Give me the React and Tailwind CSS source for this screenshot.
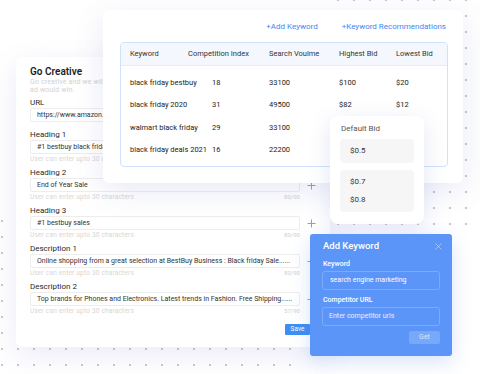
import React from 'react';

const dots =
	'bg-[radial-gradient(circle,#c3c6ce_0.8px,transparent_1.2px)] bg-[length:16px_16px]';

const fields = [
	{ label: 'Heading 1', value: '#1 bestbuy black friday', count: '80/90' },
	{ label: 'Heading 2', value: 'End of Year Sale', count: '80/90' },
	{ label: 'Heading 3', value: '#1 bestbuy sales', count: '80/90' },
	{
		label: 'Description 1',
		value: 'Online shopping from a great selection at BestBuy Business : Black friday Sale......',
		count: '80/90'
	},
	{
		label: 'Description 2',
		value: 'Top brands for Phones and Electronics. Latest trends in Fashion. Free Shipping......',
		count: '57/90'
	}
];

const rows = [
	['black friday bestbuy', '18', '33100', '$100', '$20'],
	['black friday 2020', '31', '49500', '$82', '$12'],
	['walmart black friday', '29', '33100', '', ''],
	['black friday deals 2021', '16', '22200', '', '']
];

const cols = 'grid grid-cols-[58px_81px_70px_57px_1fr] pl-[9px]';

const Plus = () => (
	<svg width="9" height="9" viewBox="0 0 9 9" className="shrink-0">
		<path d="M4.5 0.5v8M0.5 4.5h8" stroke="#6ea6f5" strokeWidth="1" />
	</svg>
);

const CreativeCard = () => (
	<div className="absolute left-[16px] top-[57px] w-[314px] h-[290px] bg-white rounded-[6px] shadow-[0_8px_28px_rgba(90,100,190,0.13)] pl-[14px] pt-[9px]">
		<div className="text-[10px] leading-[12px] font-semibold text-[#1d1d1f]">Go Creative</div>
		<div className="text-[7px] leading-[8px] text-[#d2d2d2] tracking-[0.02em]">
			Go creative and we will
			<br />
			ad would win.
		</div>
		<div className="mt-[4px] text-[8px] leading-[10px] text-[#2a2a2a]">URL</div>
		<div className="w-[270px] h-[14px] border border-[#ededed] rounded-[2px] pl-[6px] text-[7px] leading-[12px] text-[#333] whitespace-nowrap overflow-hidden">
			https://www.amazon.com
		</div>

		{fields.map((f, i) => (
			<div key={f.label} className={i === 0 ? 'mt-[8px]' : 'mt-[5px]'}>
				<div className="text-[8px] leading-[10px] text-[#2a2a2a]">{f.label}</div>
				<div className="flex items-center gap-[7px]">
					<div className="w-[270px] h-[14px] border border-[#ededed] rounded-[2px] pl-[6px] text-[7px] leading-[12px] text-[#333] whitespace-nowrap overflow-hidden">
						{f.value}
					</div>
					<Plus />
				</div>
				<div className="w-[270px] mt-[1px] flex justify-between text-[6.5px] leading-[8px] text-[#d6d6d6] tracking-[0.03em]">
					<span>User can enter upto 30 characters</span>
					<span className="tracking-normal text-[6px] text-[#cfcfcf]">{i === 0 ? '' : f.count}</span>
				</div>
			</div>
		))}

		<div className="w-[280px] flex justify-end mt-[9px]">
			<button className="h-[11px] w-[25px] bg-[#3d8ff4] rounded-[1px] text-white text-[6.5px] leading-[11px]">
				Save
			</button>
		</div>
	</div>
);

const KeywordCard = () => (
	<div className="absolute left-[103px] top-[10px] w-[360px] h-[173px] bg-white rounded-[6px] shadow-[0_8px_30px_rgba(90,100,190,0.14)] pt-[12px] px-[15px] pl-[17px]">
		<div className="flex justify-end gap-[24px] pr-[2px] h-[10px] items-center text-[8px] text-[#3f86f2]">
			<span>+Add Keyword</span>
			<span>+Keyword Recommendations</span>
		</div>
		<div className="mt-[10px] border border-[#cfe2fb] rounded-[4px] overflow-hidden">
			<div className={`${cols} h-[23px] items-center bg-[#f4f8fe] border-b border-[#e3eefc] text-[7.5px] text-[#333]`}>
				<span>Keyword</span>
				<span>Competition Index</span>
				<span>Search Voulme</span>
				<span>Highest Bid</span>
				<span>Lowest Bid</span>
			</div>
			<div className="py-[5px]">
				{rows.map(r => (
					<div key={r[0]} className={`${cols} h-[22.5px] items-center text-[7.5px] text-[#222]`}>
						<span className="whitespace-nowrap">{r[0]}</span>
						<span className="pl-[24px]">{r[1]}</span>
						<span>{r[2]}</span>
						<span>{r[3]}</span>
						<span>{r[4]}</span>
					</div>
				))}
			</div>
		</div>
	</div>
);

const DefaultBid = () => (
	<div className="absolute left-[330px] top-[116px] w-[94px] h-[108px] bg-white rounded-[8px] shadow-[0_6px_22px_rgba(90,100,190,0.16)] px-[10px] pt-[8px]">
		<div className="text-[8px] leading-[10px] text-[#555] pl-[1px]">Default Bid</div>
		<div className="mt-[5px] h-[24px] rounded-[4px] bg-[#f6f6f7] pl-[10px] flex items-center text-[8px] text-[#333]">
			$0.5
		</div>
		<div className="mt-[7px] h-[42px] rounded-[4px] bg-[#f6f6f7] pl-[10px] flex flex-col justify-center gap-[8px] text-[8px] leading-[10px] text-[#333]">
			<span>$0.7</span>
			<span>$0.8</span>
		</div>
	</div>
);

const AddKeyword = () => (
	<div className="absolute left-[310px] top-[234px] w-[142px] h-[122px] bg-[#5b95f8] rounded-[3px] shadow-[0_6px_20px_rgba(60,110,220,0.2)] px-[12px] pt-[7px] text-white">
		<div className="flex items-center justify-between h-[11px] pl-[1px]">
			<span className="text-[9.5px] font-medium">Add Keyword</span>
			<svg width="7" height="7" viewBox="0 0 7 7" className="mr-[-2px]">
				<path d="M0.5 0.5l6 6M6.5 0.5l-6 6" stroke="#a9c7fb" strokeWidth="0.9" />
			</svg>
		</div>
		<div className="mt-[8px] text-[7px] leading-[8px] font-medium pl-[1px]">Keyword</div>
		<div className="mt-[3px] h-[19px] border border-[#7eabf9] rounded-[3px] pl-[7px] flex items-center text-[7px] text-white">
			search engine marketing
		</div>
		<div className="mt-[6px] text-[7px] leading-[8px] font-medium pl-[1px]">Competitor URL</div>
		<div className="mt-[3px] h-[19px] border border-[#7eabf9] rounded-[3px] pl-[6px] flex items-center text-[7px] text-[#e8f0fe]">
			Enter competitor urls
		</div>
		<div className="mt-[5px] flex justify-end">
			<div className="w-[31px] h-[13px] rounded-[2px] bg-[#77a8fa] flex items-center justify-center text-[7px] text-[#dbe7fd]">
				Get
			</div>
		</div>
	</div>
);

export default function App() {
	return (
		<div className="relative w-[480px] h-[374px] overflow-hidden bg-white font-['Roboto',sans-serif]">
			{/* dotted backdrop */}
			<div className={`absolute left-[330px] top-[-8px] w-[160px] h-[246px] ${dots}`} />
			<div className={`absolute left-[-6px] top-[213px] w-[306px] h-[170px] ${dots}`} />

			<CreativeCard />
			<KeywordCard />
			<DefaultBid />
			<AddKeyword />
		</div>
	);
}
